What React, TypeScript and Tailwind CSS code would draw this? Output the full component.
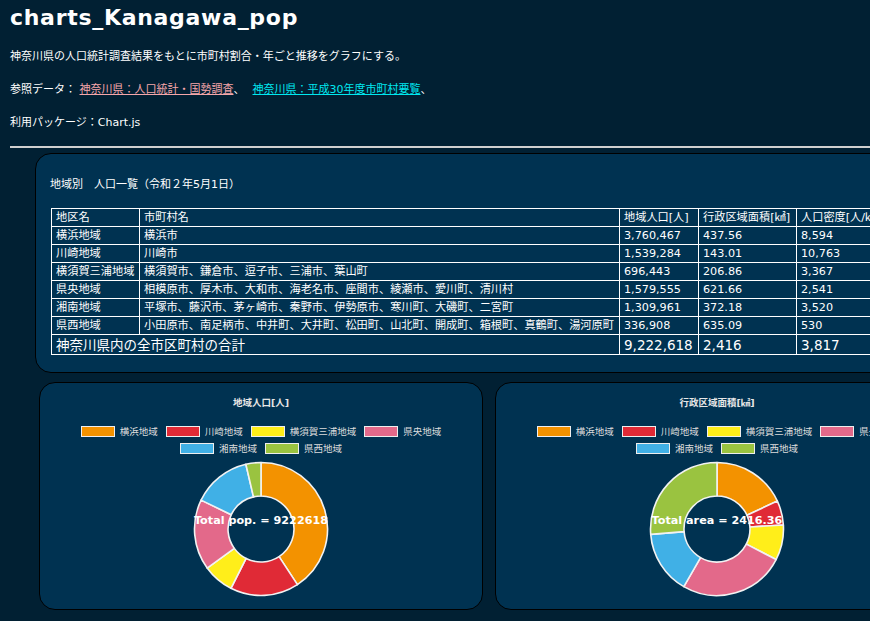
import React from "react";

const regions = ["横浜地域", "川崎地域", "横須賀三浦地域", "県央地域", "湘南地域", "県西地域"];
const colors = ["#f39200", "#e02a36", "#ffee1a", "#e3698a", "#40b0e6", "#9ac340"];

const rows = [
  ["横浜地域", "横浜市", "3,760,467", "437.56", "8,594"],
  ["川崎地域", "川崎市", "1,539,284", "143.01", "10,763"],
  ["横須賀三浦地域", "横須賀市、鎌倉市、逗子市、三浦市、葉山町", "696,443", "206.86", "3,367"],
  ["県央地域", "相模原市、厚木市、大和市、海老名市、座間市、綾瀬市、愛川町、清川村", "1,579,555", "621.66", "2,541"],
  ["湘南地域", "平塚市、藤沢市、茅ヶ崎市、秦野市、伊勢原市、寒川町、大磯町、二宮町", "1,309,961", "372.18", "3,520"],
  ["県西地域", "小田原市、南足柄市、中井町、大井町、松田町、山北町、開成町、箱根町、真鶴町、湯河原町", "336,908", "635.09", "530"],
];

const pop = [3760467, 1539284, 696443, 1579555, 1309961, 336908];
const area = [437.56, 143.01, 206.86, 621.66, 372.18, 635.09];

function arc(cx: number, cy: number, r0: number, r1: number, a0: number, a1: number) {
  const p = (r: number, a: number) => `${(cx + r * Math.cos(a)).toFixed(3)} ${(cy + r * Math.sin(a)).toFixed(3)}`;
  const large = a1 - a0 > Math.PI ? 1 : 0;
  return `M ${p(r1, a0)} A ${r1} ${r1} 0 ${large} 1 ${p(r1, a1)} L ${p(r0, a1)} A ${r0} ${r0} 0 ${large} 0 ${p(r0, a0)} Z`;
}

function Donut({ values, label }: { values: number[]; label: string }) {
  const total = values.reduce((s, v) => s + v, 0);
  let a = -Math.PI / 2;
  const paths = values.map((v, i) => {
    const a0 = a;
    const a1 = a + (v / total) * Math.PI * 2;
    a = a1;
    return <path key={i} d={arc(70, 70, 33, 66.5, a0, a1)} fill={colors[i]} stroke="#f2f2f2" strokeWidth={1.6} strokeLinejoin="round" />;
  });
  return (
    <svg width={140} height={140} viewBox="0 0 140 140" className="overflow-visible mt-[4px]">
      {paths}
      <text x={70} y={65} textAnchor="middle" fontFamily="'DejaVu Sans', sans-serif" fontWeight="bold" fontSize={11.2} fill="#ffffff">
        {label}
      </text>
    </svg>
  );
}

function LegendItem({ i }: { i: number }) {
  return (
    <div className="flex items-center gap-[5px]">
      <span className="block w-[34px] h-[11px] border-[1.5px] border-[#eeeeee]" style={{ backgroundColor: colors[i] }} />
      <span className="text-[9.5px] leading-[13px] text-[#dcdcdc]">{regions[i]}</span>
    </div>
  );
}

function ChartPanel({ title, values, label }: { title: string; values: number[]; label: string }) {
  return (
    <div className="w-[444px] h-[228px] shrink-0 rounded-[16px] border border-black bg-[#003251] flex flex-col items-center">
      <div className="mt-[14px] text-[9.5px] leading-[12px] font-bold text-[#e6e6e6]">{title}</div>
      <div className="mt-[16px] flex gap-[8px] whitespace-nowrap">
        {[0, 1, 2, 3].map((i) => (
          <LegendItem key={i} i={i} />
        ))}
      </div>
      <div className="mt-[4px] flex gap-[8px] whitespace-nowrap">
        {[4, 5].map((i) => (
          <LegendItem key={i} i={i} />
        ))}
      </div>
      <Donut values={values} label={label} />
    </div>
  );
}

export default function App() {
  const td = "border border-white px-[4px] h-[18px] py-0 leading-[15px] whitespace-nowrap overflow-hidden";
  const tdTotal = "border border-white px-[4px] h-[20px] py-0 text-[13.5px] leading-[18px] whitespace-nowrap";
  return (
    <div
      className="w-[870px] h-[621px] overflow-hidden bg-[#012033] text-white"
      style={{ fontFamily: "'DejaVu Sans', 'Noto Sans CJK JP', sans-serif" }}
    >
      <div className="px-[10px]">
        <h1 className="pt-[4px] text-[22px] leading-[28px] font-bold tracking-[0.7px]">charts_Kanagawa_pop</h1>
        <p className="mt-[17px] text-[11px] leading-[16px]">神奈川県の人口統計調査結果をもとに市町村割合・年ごと推移をグラフにする。</p>
        <p className="mt-[17px] text-[11px] leading-[16px] whitespace-nowrap">
          参照データ：{" "}
          <a className="underline text-[#f5a6aa]">神奈川県：人口統計・国勢調査</a>、
          <a className="ml-[8px] underline text-[#00e8f0]">神奈川県：平成30年度市町村要覧</a>、
        </p>
        <p className="mt-[17px] text-[11px] leading-[16px]">利用パッケージ：Chart.js</p>
      </div>
      <div className="ml-[10px] mt-[15px] h-[2px] bg-[#cfcfcf]" />

      <div className="ml-[35px] mt-[5px] w-[900px] rounded-[16px] border border-black bg-[#003251] pl-[15px] pt-[23px] pb-[17px]">
        <div className="text-[11px] leading-[16px] ml-[-1px]">地域別　人口一覧（令和２年5月1日）</div>
        <table className="mt-[15px] table-fixed border-collapse w-[845px] text-[11.2px]">
          <colgroup>
            <col className="w-[88px]" />
            <col className="w-[480px]" />
            <col className="w-[79px]" />
            <col className="w-[98px]" />
            <col className="w-[100px]" />
          </colgroup>
          <tbody>
            <tr>
              <td className={td}>地区名</td>
              <td className={td}>市町村名</td>
              <td className={td}>地域人口[人]</td>
              <td className={td}>行政区域面積[㎢]</td>
              <td className={td}>人口密度[人/㎢]</td>
            </tr>
            {rows.map((r) => (
              <tr key={r[0]}>
                {r.map((c, j) => (
                  <td key={j} className={td}>
                    {c}
                  </td>
                ))}
              </tr>
            ))}
            <tr>
              <td colSpan={2} className={tdTotal}>
                神奈川県内の全市区町村の合計
              </td>
              <td className={tdTotal}>9,222,618</td>
              <td className={tdTotal}>2,416</td>
              <td className={tdTotal}>3,817</td>
            </tr>
          </tbody>
        </table>
      </div>

      <div className="ml-[39px] mt-[9px] flex gap-[12px]">
        <ChartPanel title="地域人口[人]" values={pop} label="Total pop. = 9222618" />
        <ChartPanel title="行政区域面積[㎢]" values={area} label="Total area = 2416.36" />
      </div>
    </div>
  );
}
